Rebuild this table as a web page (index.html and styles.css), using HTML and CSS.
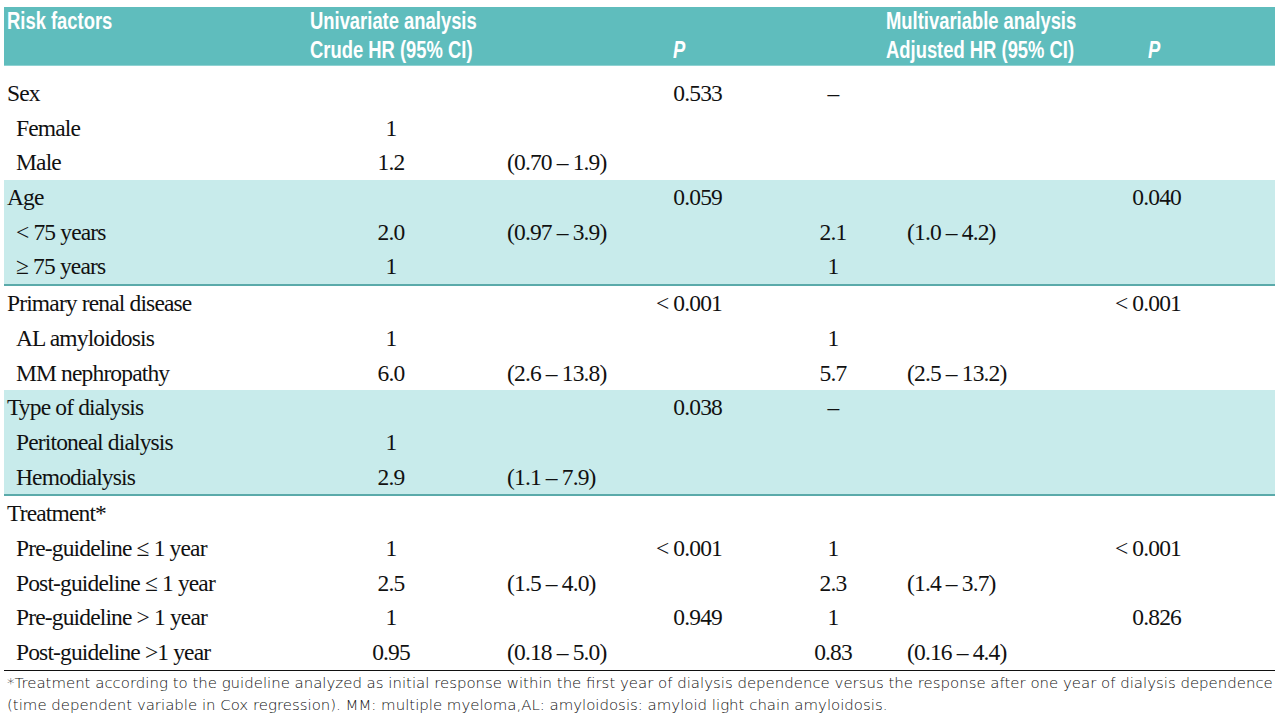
FILE: index.html
```html
<!DOCTYPE html>
<html lang="en">
<head>
<meta charset="utf-8">
<title>Risk factors table</title>
<link rel="stylesheet" href="styles.css">
</head>
<body>
<div class="table">
  <div class="thead">
    <div class="h-label"><div class="ht">Risk factors</div><div class="ht">&nbsp;</div></div>
    <div class="h-uni"><div class="ht">Univariate analysis</div><div class="ht">Crude HR (95% CI)</div></div>
    <div class="h-p"><div class="ht">&nbsp;</div><div class="ht"><i>P</i></div></div>
    <div class="h-multi"><div class="ht">Multivariable analysis</div><div class="ht">Adjusted HR (95% CI)</div></div>
    <div class="h-p2"><div class="ht">&nbsp;</div><div class="ht"><i>P</i></div></div>
  </div>
  <div class="tbody">
    <div class="group">
      <div class="row"><div class="c-label">Sex</div><div class="c-hr"></div><div class="c-ci"></div><div class="c-p">0.533</div><div class="c-hr2">–</div><div class="c-ci2"></div><div class="c-p2"></div></div>
      <div class="row"><div class="c-label sub">Female</div><div class="c-hr">1</div><div class="c-ci"></div><div class="c-p"></div><div class="c-hr2"></div><div class="c-ci2"></div><div class="c-p2"></div></div>
      <div class="row"><div class="c-label sub">Male</div><div class="c-hr">1.2</div><div class="c-ci">(0.70 – 1.9)</div><div class="c-p"></div><div class="c-hr2"></div><div class="c-ci2"></div><div class="c-p2"></div></div>
    </div>
    <div class="group shaded">
      <div class="row"><div class="c-label">Age</div><div class="c-hr"></div><div class="c-ci"></div><div class="c-p">0.059</div><div class="c-hr2"></div><div class="c-ci2"></div><div class="c-p2">0.040</div></div>
      <div class="row"><div class="c-label sub">&lt; 75 years</div><div class="c-hr">2.0</div><div class="c-ci">(0.97 – 3.9)</div><div class="c-p"></div><div class="c-hr2">2.1</div><div class="c-ci2">(1.0 – 4.2)</div><div class="c-p2"></div></div>
      <div class="row"><div class="c-label sub">≥ 75 years</div><div class="c-hr">1</div><div class="c-ci"></div><div class="c-p"></div><div class="c-hr2">1</div><div class="c-ci2"></div><div class="c-p2"></div></div>
    </div>
    <div class="group">
      <div class="row"><div class="c-label">Primary renal disease</div><div class="c-hr"></div><div class="c-ci"></div><div class="c-p">&lt; 0.001</div><div class="c-hr2"></div><div class="c-ci2"></div><div class="c-p2">&lt; 0.001</div></div>
      <div class="row"><div class="c-label sub">AL amyloidosis</div><div class="c-hr">1</div><div class="c-ci"></div><div class="c-p"></div><div class="c-hr2">1</div><div class="c-ci2"></div><div class="c-p2"></div></div>
      <div class="row"><div class="c-label sub">MM nephropathy</div><div class="c-hr">6.0</div><div class="c-ci">(2.6 – 13.8)</div><div class="c-p"></div><div class="c-hr2">5.7</div><div class="c-ci2">(2.5 – 13.2)</div><div class="c-p2"></div></div>
    </div>
    <div class="group shaded">
      <div class="row"><div class="c-label">Type of dialysis</div><div class="c-hr"></div><div class="c-ci"></div><div class="c-p">0.038</div><div class="c-hr2">–</div><div class="c-ci2"></div><div class="c-p2"></div></div>
      <div class="row"><div class="c-label sub">Peritoneal dialysis</div><div class="c-hr">1</div><div class="c-ci"></div><div class="c-p"></div><div class="c-hr2"></div><div class="c-ci2"></div><div class="c-p2"></div></div>
      <div class="row"><div class="c-label sub">Hemodialysis</div><div class="c-hr">2.9</div><div class="c-ci">(1.1 – 7.9)</div><div class="c-p"></div><div class="c-hr2"></div><div class="c-ci2"></div><div class="c-p2"></div></div>
    </div>
    <div class="group last">
      <div class="row"><div class="c-label">Treatment*</div><div class="c-hr"></div><div class="c-ci"></div><div class="c-p"></div><div class="c-hr2"></div><div class="c-ci2"></div><div class="c-p2"></div></div>
      <div class="row"><div class="c-label sub">Pre-guideline ≤ 1 year</div><div class="c-hr">1</div><div class="c-ci"></div><div class="c-p">&lt; 0.001</div><div class="c-hr2">1</div><div class="c-ci2"></div><div class="c-p2">&lt; 0.001</div></div>
      <div class="row"><div class="c-label sub">Post-guideline ≤ 1 year</div><div class="c-hr">2.5</div><div class="c-ci">(1.5 – 4.0)</div><div class="c-p"></div><div class="c-hr2">2.3</div><div class="c-ci2">(1.4 – 3.7)</div><div class="c-p2"></div></div>
      <div class="row"><div class="c-label sub">Pre-guideline &gt; 1 year</div><div class="c-hr">1</div><div class="c-ci"></div><div class="c-p">0.949</div><div class="c-hr2">1</div><div class="c-ci2"></div><div class="c-p2">0.826</div></div>
      <div class="row"><div class="c-label sub">Post-guideline &gt;1 year</div><div class="c-hr">0.95</div><div class="c-ci">(0.18 – 5.0)</div><div class="c-p"></div><div class="c-hr2">0.83</div><div class="c-ci2">(0.16 – 4.4)</div><div class="c-p2"></div></div>
    </div>
  </div>
  <div class="note">
    <div class="note-line">*Treatment according to the guideline analyzed as initial response within the first year of dialysis dependence versus the response after one year of dialysis dependence</div>
    <div class="note-line">(time dependent variable in Cox regression). MM: multiple myeloma,AL: amyloidosis: amyloid light chain amyloidosis.</div>
  </div>
</div>
</body>
</html>
```

FILE: styles.css
```css
* { box-sizing: border-box; }

html, body {
  margin: 0;
  padding: 0;
  background: #ffffff;
}

.table {
  width: 1271px;
  margin: 7px 0 0 4px;
  color: #111111;
}

/* header */
.thead {
  display: grid;
  grid-template-columns: 306px 363px 213px 262px 127px;
  background: #5fbdbd;
  color: #ffffff;
  font-family: "Liberation Sans", Arial, sans-serif;
  font-weight: bold;
  font-size: 23px;
  line-height: 29px;
  height: 59px;
  padding-top: 0;
  border-bottom: 1px solid #8fd2d2;
}

.h-label { padding-left: 3px; }

.ht {
  white-space: nowrap;
  transform: scaleX(0.8);
  transform-origin: left center;
}

/* body */
.tbody {
  margin-top: 10px;
  font-family: "Liberation Serif", "Times New Roman", serif;
  font-size: 23.5px;
  letter-spacing: -0.85px;
}

.row {
  display: grid;
  grid-template-columns: 336px 102px 178px 162px 102px 196px 195px;
  height: 34.7px;
  line-height: 34.7px;
  white-space: nowrap;
}

.shaded {
  background: #c8ebeb;
  border-bottom: 2px solid #5aaaaa;
}

.last {
  border-bottom: 1px solid #111111;
}

.c-label { padding-left: 3px; }
.c-label.sub { padding-left: 12px; }
.c-hr, .c-hr2 { text-align: center; }
.c-ci { padding-left: 65px; }
.c-p { text-align: right; padding-right: 60px; }
.c-ci2 { padding-left: 23px; }
.c-p2 { text-align: right; padding-right: 94px; }

/* footnote */
.note {
  margin-top: 1px;
  padding-left: 3px;
  font-family: "DejaVu Sans", "Liberation Sans", sans-serif;
  font-weight: 200;
  font-size: 14.94px;
  line-height: 22px;
  color: #111111;
  white-space: nowrap;
}
```
